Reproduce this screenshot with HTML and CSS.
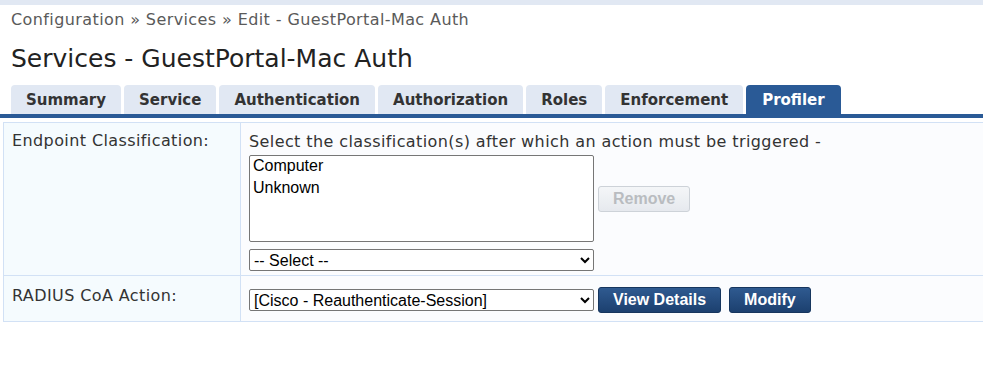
FILE: index.html
```html
<!DOCTYPE html>
<html lang="en">
<head>
    <meta charset="UTF-8">
    <title>Services - GuestPortal-Mac Auth</title>
    <link rel="stylesheet" href="styles.css">
</head>
<body>
    <div class="topbar"></div>
    <div class="crumbs">Configuration &raquo; Services &raquo; Edit - GuestPortal-Mac Auth</div>
    <h1 class="title">Services - GuestPortal-Mac Auth</h1>

    <div class="tabs">
        <div class="tab">Summary</div>
        <div class="tab">Service</div>
        <div class="tab">Authentication</div>
        <div class="tab">Authorization</div>
        <div class="tab">Roles</div>
        <div class="tab">Enforcement</div>
        <div class="tab active">Profiler</div>
    </div>

    <table class="form-table">
        <tr class="row-class">
            <td class="label">Endpoint Classification:</td>
            <td class="value">
                <div class="hint">Select the classification(s) after which an action must be triggered -</div>
                <div class="list-row">
                    <select class="listbox" multiple>
                        <option>Computer</option>
                        <option>Unknown</option>
                    </select>
                    <button class="btn" disabled>Remove</button>
                </div>
                <select class="dropdown">
                    <option>-- Select --</option>
                </select>
            </td>
        </tr>
        <tr class="row-coa">
            <td class="label">RADIUS CoA Action:</td>
            <td class="value">
                <div class="action-row">
                    <select class="dropdown">
                        <option>[Cisco - Reauthenticate-Session]</option>
                    </select>
                    <button class="btn">View Details</button>
                    <button class="btn">Modify</button>
                </div>
            </td>
        </tr>
    </table>
</body>
</html>
```

FILE: styles.css
```css
body {
    margin: 0;
    font-family: "DejaVu Sans", Verdana, sans-serif;
    background: #ffffff;
    color: #333;
}
.topbar {
    height: 5px;
    background: #e1e8f3;
}
.crumbs {
    padding: 5px 11px 0;
    font-size: 16px;
    letter-spacing: 0.4px;
    line-height: 20px;
    color: #5a5a5a;
}
.title {
    margin: 0;
    padding: 14px 11px 0;
    font-size: 25px;
    font-weight: normal;
    line-height: 30px;
    color: #222;
}
.tabs {
    display: flex;
    gap: 3px;
    margin-top: 11px;
    padding-left: 11px;
    border-bottom: 4px solid #2a5a96;
}
.tab {
    height: 29px;
    line-height: 31px;
    padding: 0 15px;
    font-size: 15px;
    font-weight: bold;
    color: #333;
    background: #e1e8f3;
    border-radius: 4px 4px 0 0;
}
.tab:last-child {
    padding: 0 16px;
}
.tab.active {
    background: #2a5a96;
    color: #fff;
}
.form-table {
    margin: 4px 0 0 3px;
    width: calc(100% + 10px);
    border-collapse: collapse;
}
.form-table td {
    border: 1px solid #d2e1f5;
    vertical-align: top;
}
.label {
    width: 220px;
    padding: 8px 8px;
    font-size: 16px;
    letter-spacing: 0.4px;
    line-height: 19px;
    background: #f5fbfe;
    color: #333;
}
.row-coa .label {
    padding-top: 10px;
}
.value {
    padding: 9px 8px 4px;
    background: #fbfcfe;
}
.hint {
    font-size: 16px;
    letter-spacing: 0.4px;
    line-height: 20px;
    color: #333;
}
.list-row {
    display: flex;
    align-items: center;
    gap: 4px;
    margin-top: 3px;
}
.listbox {
    width: 345px;
    height: 87px;
    margin: 0;
    padding: 0 3px;
    border: 1px solid #767676;
    border-radius: 2px;
    font-family: "Liberation Sans", Arial, sans-serif;
    font-size: 16px;
    color: #000;
    background: #fff;
    overflow: hidden;
}
.listbox option {
    padding: 1px 0 2px;
}
.dropdown {
    display: block;
    width: 345px;
    height: 22px;
    margin-top: 7px;
    font-family: "Liberation Sans", Arial, sans-serif;
    font-size: 16px;
    color: #000;
    background: #fff;
    border: 1px solid #767676;
    border-radius: 2px;
}
.row-coa .value {
    padding: 11px 8px 8px;
}
.action-row {
    display: flex;
    align-items: center;
    gap: 8px;
}
.action-row .dropdown {
    margin-top: 0;
}
.action-row .dropdown + .btn {
    margin-left: -4px;
}
.btn {
    height: 26px;
    padding: 0 14px;
    font-family: "Liberation Sans", Arial, sans-serif;
    font-size: 16px;
    font-weight: bold;
    color: #fff;
    background: linear-gradient(#2f5a90, #1c406f);
    border: 1px solid #17365e;
    border-radius: 3px;
    cursor: pointer;
}
.btn:disabled {
    padding: 0 14px;
    color: #b9bcc0;
    background: linear-gradient(#f4f6f8, #e6e9ee);
    border: 1px solid #cdd2d8;
    cursor: default;
}
```
